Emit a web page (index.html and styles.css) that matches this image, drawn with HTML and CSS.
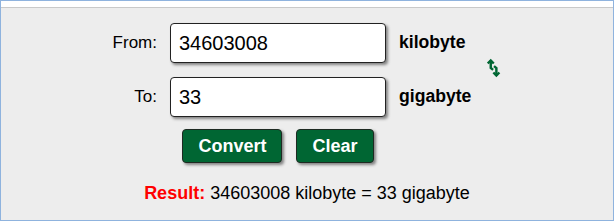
FILE: index.html
```html
<!DOCTYPE html>
<html lang="en">
  <head>
    <meta charset="UTF-8" />
    <meta name="viewport" content="width=device-width, initial-scale=1.0" />
    <title>Data Storage Converter</title>
    <link rel="stylesheet" href="styles.css">
  </head>
  <body>
    <div class="top-strip"></div>

    <div class="panel">
      <form class="converter" onsubmit="return false">
        <label class="field-label" for="fromValue">From:</label>
        <input type="text" id="fromValue" class="field-input" value="34603008" />
        <span class="unit">kilobyte</span>

        <!-- swap units -->
        <a href="#" class="swap" title="Swap units">
          <svg width="16" height="20" viewBox="0 0 16 20">
            <g fill="none" stroke="#006633" stroke-width="2.6">
              <path d="M4 2 V10 L6.5 12" />
              <path d="M0.8 5.2 L4 2 L7.2 5.2" />
              <path d="M7.5 8 L10 10 V18" />
              <path d="M6.8 14.8 L10 18 L13.2 14.8" />
            </g>
          </svg>
        </a>

        <label class="field-label" for="toValue">To:</label>
        <input type="text" id="toValue" class="field-input" value="33" />
        <span class="unit">gigabyte</span>

        <div class="action-buttons">
          <button type="button" class="button">Convert</button>
          <button type="button" class="button">Clear</button>
        </div>
      </form>

      <p class="result">
        <span class="result-label">Result:</span> 34603008 kilobyte = 33 gigabyte
      </p>
    </div>
  </body>
</html>
```

FILE: styles.css
```css
:root {
  --frame-blue: #8fb3de;
  --panel: #ededed;
  --panel-line: #c9c9c9;
  --green: #006633;
  --text: #000000;
  --red: #ff0000;
}

* {
  margin: 0;
  padding: 0;
  box-sizing: border-box;
  font-family: "Liberation Sans", Arial, sans-serif;
}

html,
body {
  height: 100%;
}

body {
  display: flex;
  flex-direction: column;
  border: 1px solid var(--frame-blue);
  background-color: #ffffff;
  color: var(--text);
}

.top-strip {
  height: 6px;
}

.panel {
  flex: 1;
  background-color: var(--panel);
  border-top: 1px solid var(--panel-line);
  padding-top: 15px;
}

/* Form grid */
.converter {
  display: grid;
  grid-template-columns: 45px 216px 75px 15px;
  column-gap: 13px;
  row-gap: 14px;
  justify-content: center;
  align-items: center;
}

.field-label {
  font-size: 17px;
  text-align: right;
}

.field-input {
  height: 40px;
  width: 100%;
  padding: 0 8px;
  font-size: 20px;
  color: var(--text);
  background: #ffffff;
  border: 1px solid #222222;
  border-radius: 4px;
  box-shadow: 2px 2px 3px rgba(0, 0, 0, 0.45);
}

.field-input:focus {
  outline: none;
}

.unit {
  font-size: 17.6px;
  font-weight: bold;
  margin-top: -2px;
}

.swap {
  grid-column: 4;
  grid-row: 1 / span 2;
  display: flex;
  justify-content: center;
  margin-top: -4px;
}

.action-buttons {
  grid-column: 2;
  display: flex;
  justify-content: center;
  gap: 14px;
  margin-top: -2px;
}

.button {
  height: 34px;
  padding: 0 15px;
  font-size: 18px;
  font-weight: bold;
  color: #ffffff;
  background-color: var(--green);
  border: 1px solid #1e2a22;
  border-radius: 4px;
  box-shadow: 2px 2px 3px rgba(0, 0, 0, 0.45);
  cursor: pointer;
}

.button:hover {
  opacity: 0.9;
}

.result {
  margin-top: 20px;
  font-size: 18px;
  text-align: center;
}

.result-label {
  color: var(--red);
  font-weight: bold;
}
```
